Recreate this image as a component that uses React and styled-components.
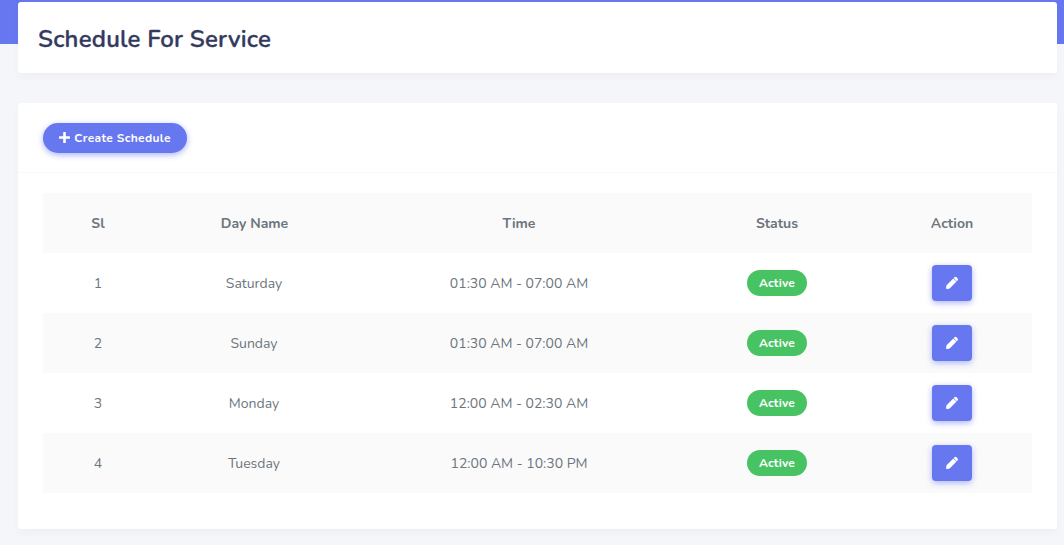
import React from "react";
import styled, { createGlobalStyle } from "styled-components";

const GlobalStyle = createGlobalStyle`
  *, *::before, *::after { box-sizing: border-box; }
  body {
    margin: 0;
    background: #f4f6f9;
    color: #6c757d;
    font-family: Nunito, Lato, "Open Sans", sans-serif;
    font-size: 14px;
    line-height: 24px;
  }
`;

const Page = styled.main`
  min-height: 545px;
  padding: 2px 7px 16px 18px;
  display: flex;
  flex-direction: column;
  gap: 30px;
  background: linear-gradient(#6777ef, #6777ef) top / 100% 44px no-repeat #f4f6f9;
`;

const Card = styled.section`
  background: #fff;
  border-radius: 3px;
  box-shadow: 0 4px 8px rgba(0, 0, 0, 0.03);
`;

const TitleCard = styled(Card)`
  height: 71px;
  padding: 2px 20px 0;
  display: flex;
  align-items: center;
`;

const Title = styled.h1`
  margin: 0;
  color: #34395e;
  font-size: 24px;
  font-weight: 600;
  line-height: 28px;
  letter-spacing: 0.23px;
  -webkit-text-stroke: 0.35px #34395e;
`;

const ScheduleCard = styled(Card)`
  height: 426px;
`;

const CardHeader = styled.header`
  height: 70px;
  padding: 0 25px;
  display: flex;
  align-items: center;
  border-bottom: 1px solid #f9f9f9;
`;

const CreateButton = styled.button`
  width: 144px;
  height: 30px;
  padding: 0;
  border: 0;
  border-radius: 30px;
  display: flex;
  align-items: center;
  justify-content: center;
  gap: 4px;
  background: #6777ef;
  box-shadow: 0 2px 6px #acb5f6;
  color: #fff;
  font: 700 12px/24px Nunito, Lato, sans-serif;
  letter-spacing: 0.35px;
`;

const CardBody = styled.div`
  padding: 20px 25px;
`;

const Table = styled.table`
  width: 989px;
  table-layout: fixed;
  border-collapse: collapse;
  text-align: center;
`;

const Column = styled.col`
  width: ${(p) => p.$width}px;
`;

const Row = styled.tr`
  height: 60px;
  background: ${(p) => (p.$striped ? "#fafafa" : "#fff")};
`;

const HeadCell = styled.th`
  padding: 2px 0 0 ${(p) => p.$inset || 0}px;
  font-weight: 700;
`;

const Cell = styled.td`
  padding: 0;
  vertical-align: middle;
`;

const TextCell = styled(Cell)`
  padding-top: 2px;
`;

const Badge = styled.span`
  display: inline-block;
  width: 60px;
  height: 26px;
  border-radius: 30px;
  background: #47c363;
  color: #fff;
  font-size: 12px;
  font-weight: 700;
  line-height: 26px;
  letter-spacing: 0.15px;
  vertical-align: middle;
`;

const EditButton = styled.button`
  display: inline-flex;
  align-items: center;
  justify-content: center;
  width: 40px;
  height: 36px;
  padding: 0;
  border: 0;
  border-radius: 4px;
  background: #6777ef;
  box-shadow: 0 2px 6px #acb5f6;
  color: #fff;
  vertical-align: middle;
`;

const PlusIcon = () => (
  <svg width="11" height="11" viewBox="0 0 11 11" fill="currentColor" aria-hidden="true">
    <path d="M4.8 0h1.4q.6 0 .6.6v3.6h3.6q.6 0 .6.6v1.4q0 .6-.6.6H6.8v3.6q0 .6-.6.6H4.8q-.6 0-.6-.6V6.8H.6Q0 6.8 0 6.2V4.8q0-.6.6-.6h3.6V.6q0-.6.6-.6z" />
  </svg>
);

const PencilIcon = () => (
  <svg width="14" height="14" viewBox="0 0 14 14" fill="currentColor" aria-hidden="true">
    <path d="M8.3 2.4l3.2 3.2-6.6 6.6q-.4.4-1 .5l-1.9.2q-1 .1-.9-.9l.2-1.9q.1-.6.5-1z" />
    <path d="M8.7 2l.8-.7q1.1-.9 2 0l1.1 1.1q.9 1 0 2l-.8.8z" />
  </svg>
);

const widths = [110, 202, 328, 188, 161];

const schedules = [
  { day: "Saturday", time: "01:30 AM - 07:00 AM" },
  { day: "Sunday", time: "01:30 AM - 07:00 AM" },
  { day: "Monday", time: "12:00 AM - 02:30 AM" },
  { day: "Tuesday", time: "12:00 AM - 10:30 PM" },
];

export default function App() {
  return (
    <>
      <GlobalStyle />
      <Page>
        <TitleCard>
          <Title>Schedule For Service</Title>
        </TitleCard>
        <ScheduleCard>
          <CardHeader>
            <CreateButton>
              <PlusIcon />
              <span>Create Schedule</span>
            </CreateButton>
          </CardHeader>
          <CardBody>
            <Table>
              <colgroup>
                {widths.map((w, i) => (
                  <Column key={i} $width={w} />
                ))}
              </colgroup>
              <thead>
                <Row $striped>
                  <HeadCell>Sl</HeadCell>
                  <HeadCell $inset={1}>Day Name</HeadCell>
                  <HeadCell>Time</HeadCell>
                  <HeadCell>Status</HeadCell>
                  <HeadCell $inset={1}>Action</HeadCell>
                </Row>
              </thead>
              <tbody>
                {schedules.map((s, i) => (
                  <Row key={s.day} $striped={i % 2 === 1}>
                    <TextCell>{i + 1}</TextCell>
                    <TextCell>{s.day}</TextCell>
                    <TextCell>{s.time}</TextCell>
                    <Cell>
                      <Badge>Active</Badge>
                    </Cell>
                    <Cell>
                      <EditButton aria-label={`Edit ${s.day}`}>
                        <PencilIcon />
                      </EditButton>
                    </Cell>
                  </Row>
                ))}
              </tbody>
            </Table>
          </CardBody>
        </ScheduleCard>
      </Page>
    </>
  );
}
